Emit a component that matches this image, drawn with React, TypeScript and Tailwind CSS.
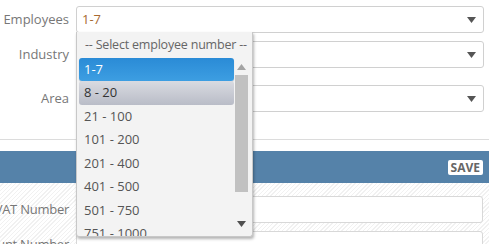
import React from "react";

const items = ["8 - 20", "21 - 100", "101 - 200", "201 - 400", "401 - 500", "501 - 750", "751 - 1000"];

function Caret() {
  return (
    <svg width="9" height="6" viewBox="0 0 9 6" className="mr-[7px]">
      <path d="M0 0H9L4.5 6Z" fill="#555" />
    </svg>
  );
}

function SelectRow({ label, value, className }: { label: string; value?: string; className: string }) {
  return (
    <div className={`flex items-center ${className}`}>
      <div className="w-[69px] text-right text-[13px] text-[#777]">{label}</div>
      <div className="ml-[7px] mr-[5px] flex h-[27px] flex-1 items-center justify-between rounded-[3px] border border-[#d0d0d0] bg-white pl-[5px]">
        <span className="text-[13px] text-[#a86a30]">{value}</span>
        <Caret />
      </div>
    </div>
  );
}

function InputRow({ label, className }: { label: string; className: string }) {
  return (
    <div className={`flex items-center ${className}`}>
      <div className="flex w-[69px] shrink-0 justify-end whitespace-nowrap text-[13px] tracking-[-0.25px] text-[#777]">
        <span className="shrink-0">{label}</span>
      </div>
      <div className="ml-[7px] mr-[6px] h-[27px] flex-1 rounded-[3px] border border-[#d8d8d8] bg-white" />
    </div>
  );
}

export default function App() {
  return (
    <div className="relative h-[244px] w-[489px] overflow-hidden bg-white font-['Open_Sans',sans-serif]">
      <SelectRow label="Employees" value="1-7" className="pt-[6px]" />
      <SelectRow label="Industry" className="mt-[8px]" />
      <SelectRow label="Area" className="mt-[17px]" />
      <div className="mt-[27px] border-b border-[#dcdcdc]" />
      <div className="mt-[11px] flex h-[32px] items-center justify-end bg-[#5582a9] pr-[6px]">
        <div className="rounded-[2px] bg-white px-[3px] text-[12px] font-bold leading-[15px] text-[#666]">SAVE</div>
      </div>
      <div className="h-[80px] bg-[repeating-linear-gradient(135deg,#ffffff_0px,#ffffff_2px,#f1f1f1_2px,#f1f1f1_3px)] pt-[13px]">
        <InputRow label="VAT Number" className="" />
        <InputRow label="Account Number" className="mt-[8px]" />
      </div>

      <div className="absolute left-[76px] top-[32px] flex h-[205px] w-[177px] flex-col rounded-b-[3px] border border-t-0 border-[#c8c8c8] bg-[#f3f3f3] shadow-[1px_2px_3px_rgba(0,0,0,0.3)]">
        <div className="whitespace-nowrap pl-[8px] pt-[4px] text-[12.5px] leading-[18px] tracking-[-0.2px] text-[#666]">
          -- Select employee number --
        </div>
        <div className="mt-[4px] flex flex-1 overflow-hidden">
          <div className="flex-1 pl-[2px]">
            <div className="flex h-[23px] items-center rounded-[3px] bg-[linear-gradient(#2a8bd6,#3d9ee2)] pl-[5px] text-[13px] text-white shadow-[0_1px_1px_rgba(0,0,0,0.2)]">
              1-7
            </div>
            {items.map((t, i) => (
              <div
                key={t}
                className={`flex h-[23.5px] items-center pl-[5px] text-[13px] ${
                  i === 0
                    ? "rounded-[3px] bg-[linear-gradient(#d9dbe1,#b9bcc7)] text-[#333]"
                    : "text-[#555]"
                }`}
              >
                {t}
              </div>
            ))}
          </div>
          <div className="ml-[1px] mr-[4px] flex w-[13px] flex-col items-center bg-[#f3f3f3]">
            <svg width="9" height="6" viewBox="0 0 9 6" className="mt-[6px]">
              <path d="M0 6H9L4.5 0Z" fill="#a3a3a3" />
            </svg>
            <div className="mt-[5px] h-[117px] w-[13px] bg-[#c1c1c1]" />
            <div className="flex-1" />
            <svg width="9" height="6" viewBox="0 0 9 6" className="mb-[9px]">
              <path d="M0 0H9L4.5 6Z" fill="#505050" />
            </svg>
          </div>
        </div>
      </div>
    </div>
  );
}
